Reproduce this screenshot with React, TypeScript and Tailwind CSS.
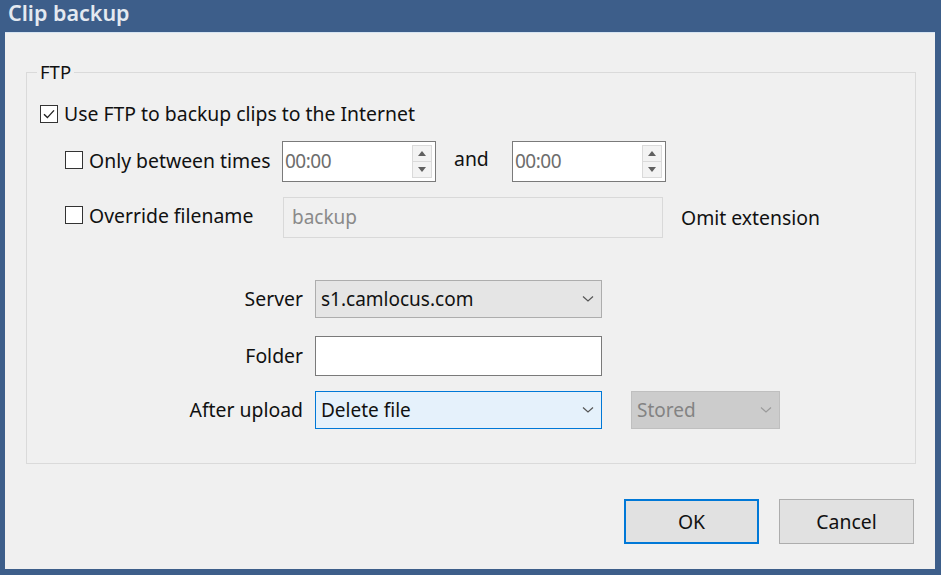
import React from "react";

const font = { fontFamily: '"Noto Sans", "Open Sans", Arial, sans-serif' };

function Check({ checked }: { checked?: boolean }) {
  return (
    <span className="w-[18px] h-[18px] border border-[#333] bg-white flex items-center justify-center shrink-0">
      {checked && (
        <svg width="14" height="14" viewBox="0 0 14 14">
          <path d="M2 7.2 L5.4 10.6 L12 3.4" fill="none" stroke="#222" strokeWidth="1.4" />
        </svg>
      )}
    </span>
  );
}

function Chevron({ color = "#555" }: { color?: string }) {
  return (
    <svg width="12" height="8" viewBox="0 0 12 8">
      <path d="M1 1.5 L6 6 L11 1.5" fill="none" stroke={color} strokeWidth="1.2" />
    </svg>
  );
}

function Spin({ value }: { value: string }) {
  return (
    <div className="w-[154px] h-[41px] border border-[#7a7a7a] bg-white flex items-center justify-between pl-[2px] pr-[3px]">
      <span className="text-[19px] text-[#6d6d6d] tracking-[-0.5px]">{value}</span>
      <div className="flex flex-col w-[20px] h-[33px]">
        <div className="flex-1 border border-[#dadada] bg-[#f3f3f3] flex items-center justify-center">
          <svg width="8" height="5" viewBox="0 0 8 5"><path d="M0 5 L4 0 L8 5Z" fill="#606060" /></svg>
        </div>
        <div className="flex-1 border border-t-0 border-[#dadada] bg-[#f3f3f3] flex items-center justify-center">
          <svg width="8" height="5" viewBox="0 0 8 5"><path d="M0 0 L4 5 L8 0Z" fill="#606060" /></svg>
        </div>
      </div>
    </div>
  );
}

export default function App() {
  return (
    <div className="w-[941px] h-[575px] bg-[#3d5e8a] flex flex-col text-[#111]" style={font}>
      <div className="h-[32px] pl-[8px] flex items-center text-[21.5px] text-[#e4e9f0] font-semibold leading-none pb-[6px]">
        Clip backup
      </div>
      <div className="ml-[5px] mr-[6px] mb-[6px] flex-1 bg-[#f0f0f0] border-t border-[#d6e4f2] flex flex-col pl-[21px] pr-[21px] pt-[39px]">
        <div className="relative w-[890px] border border-[#dadada] pl-[13px] pt-[30px] pb-[34px] text-[19.4px]">
          <span className="absolute left-[10px] top-[-13px] bg-[#f0f0f0] px-[3px] leading-[24px] text-[18.5px]">FTP</span>

          <div className="h-[21px] flex items-center gap-[6px]">
            <Check checked />
            <span>Use FTP to backup clips to the Internet</span>
          </div>

          <div className="mt-[17px] h-[41px] flex items-center pl-[25px]">
            <div className="w-[217px] flex items-center gap-[6px] pb-[2px]">
              <Check />
              <span>Only between times</span>
            </div>
            <Spin value="00:00" />
            <span className="ml-[18px] w-[58px] pb-[6px]">and</span>
            <Spin value="00:00" />
          </div>

          <div className="mt-[15px] h-[41px] flex items-center pl-[25px]">
            <div className="w-[218px] flex items-center gap-[6px] pb-[4px]">
              <Check />
              <span>Override filename</span>
            </div>
            <div className="w-[380px] h-[41px] border border-[#d9d9d9] bg-[#f0f0f0] flex items-center pl-[8px] text-[#8a8a8a] text-[19px]">
              backup
            </div>
            <span className="ml-[18px]">Omit extension</span>
          </div>

          <div className="mt-[42px] h-[38px] flex items-center">
            <span className="w-[263px] text-right">Server</span>
            <div className="ml-[12px] w-[287px] h-[38px] border border-[#adadad] bg-[#e5e5e5] flex items-center justify-between pl-[5px] pr-[7px] text-[19px]">
              <span>s1.camlocus.com</span>
              <Chevron />
            </div>
          </div>

          <div className="mt-[18px] h-[40px] flex items-center">
            <span className="w-[263px] text-right">Folder</span>
            <div className="ml-[12px] w-[287px] h-[40px] border border-[#7a7a7a] bg-white" />
          </div>

          <div className="mt-[15px] h-[38px] flex items-center">
            <span className="w-[263px] text-right">After upload</span>
            <div className="ml-[12px] w-[287px] h-[38px] border border-[#0078d7] bg-[#e5f1fb] flex items-center justify-between pl-[5px] pr-[7px] text-[19px]">
              <span>Delete file</span>
              <Chevron />
            </div>
            <div className="ml-[29px] w-[149px] h-[38px] border border-[#bfbfbf] bg-[#cccccc] flex items-center justify-between pl-[5px] pr-[7px] text-[19px] text-[#838383]">
              <span>Stored</span>
              <Chevron color="#9a9a9a" />
            </div>
          </div>
        </div>

        <div className="mt-[35px] flex justify-end gap-[20px] text-[19.4px]">
          <button className="w-[135px] h-[45px] border-2 border-[#0078d7] bg-[#e1e1e1]">OK</button>
          <button className="w-[135px] h-[45px] border border-[#adadad] bg-[#e1e1e1]">Cancel</button>
        </div>
      </div>
    </div>
  );
}
